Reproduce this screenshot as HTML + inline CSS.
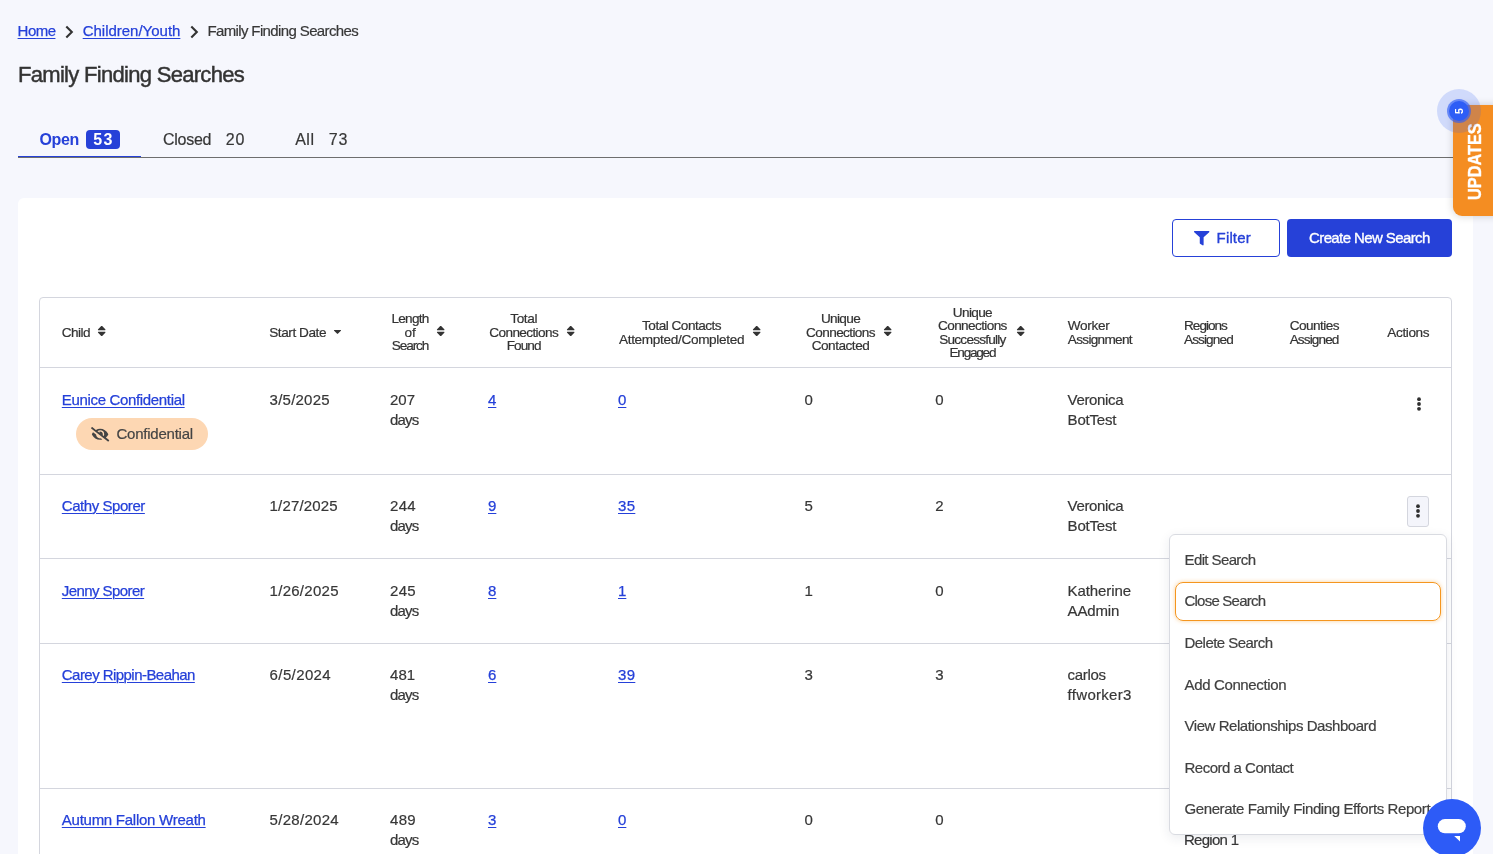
<!DOCTYPE html>
<html lang="en">
<head>
<meta charset="utf-8">
<title>Family Finding Searches</title>
<style>
*{box-sizing:border-box;margin:0;padding:0}
html,body{width:1493px;height:854px;overflow:hidden}
body{position:relative;background:#f6f7fd;font-family:"Liberation Sans",sans-serif;font-size:15px;line-height:20px;color:#373737;-webkit-text-stroke:.2px}
a{color:#2540d9;-webkit-text-stroke:.25px;text-decoration:underline;text-decoration-thickness:1px;text-underline-offset:1.6px;text-decoration-thickness:1.2px}
.abs{position:absolute;white-space:nowrap}
body>*{will-change:transform}
svg{display:block;position:absolute;overflow:visible}
/* breadcrumb */
.crumbs{position:absolute;left:0;top:21px;height:20px;width:500px}
.crumbs .abs{top:0}
h1{-webkit-text-stroke:.45px;position:absolute;left:17.7px;top:61.2px;font-size:22px;line-height:28px;font-weight:400;color:#333;white-space:nowrap}
/* tabs */
.tabs{position:absolute;left:18px;top:118px;width:1455px;height:40px;font-size:16px;line-height:20px}
.tabs .abs{top:11.6px}
.tabs .rule{position:absolute;left:0;right:0;top:39px;height:1px;background:#6e6e6e}
.tabs .active{position:absolute;left:0;top:37.6px;width:123px;height:1.6px;background:#2641d8}
.tabs b{color:#2641d8;-webkit-text-stroke:0}
.badge{position:absolute;left:68px;top:12px;width:34px;height:19px;border-radius:4px;padding-left:1px;background:#2641d8;color:#fff;font-weight:700;text-align:center;line-height:19px;-webkit-text-stroke:0}
/* card */
.card{position:absolute;left:18px;top:198px;width:1455px;height:700px;background:#fff;border-radius:6px}
.btn{position:absolute;top:21px;height:38px;border-radius:4px;font-size:15px;line-height:20px}
.btn .abs{top:8.1px;-webkit-text-stroke:.35px}
.btn-o{left:1154px;width:108px;border:1px solid #2641d8;background:#fff;color:#2641d8}
.btn-p{left:1269px;width:165px;background:#2641d8;color:#fff}
.btn-p .abs{top:9.1px}
/* table */
.tbl{position:absolute;left:21px;top:99px;width:1413px;height:620px;border:1px solid #d4d6de;border-radius:4px 4px 0 0}
.hr{position:absolute;left:0;right:0;height:1px;background:#d4d6de}
.th{position:absolute;font-size:13.6px;line-height:13.6px;color:#333;white-space:nowrap}
.th.c{text-align:center;width:160px}
.th span{display:inline-block}
.td{position:absolute;white-space:nowrap}
.pill{position:absolute;left:36px;top:120px;width:132px;height:32px;border-radius:16px;background:#fdd7b3;color:#444}
.pill .abs{left:40.4px;top:6.1px}
.kb{position:absolute;left:1367px;top:198px;width:22px;height:30.5px;border:1px solid #d4d6de;border-radius:3px;background:#f4f5fb}
/* menu */
.menu{position:absolute;left:1169px;top:534px;width:278px;height:301px;background:#fff;border:1px solid #d9dbe1;border-radius:6px;box-shadow:0 3px 12px rgba(30,40,80,.09);overflow:hidden}
.mi{position:absolute;left:5px;width:266px;height:39px;border-radius:8px;border:1.5px solid transparent}
.mi .abs{left:8.5px;top:8px;color:#404040}
.mi.f{border-color:#f5961f;box-shadow:0 0 4px rgba(245,150,31,.45)}
/* floating */
.upd{position:absolute;left:1453px;top:105px;width:48px;height:111px;background:#f48d22;border-radius:0 0 0 9px;box-shadow:0 0 8px rgba(0,0,0,.18)}
.upd .txt{position:absolute;left:1.5px;top:0.5px;width:111px;height:40px;transform-origin:0 0;transform:translate(0,111px) rotate(-90deg);color:#fff;font-weight:700;font-size:18px;line-height:40px;text-align:center;white-space:nowrap}
.upd .txt span{display:inline-block;transform:scaleX(.905);-webkit-text-stroke:.35px #fff}
.halo{position:absolute;left:1437px;top:89px;width:44px;height:44px;border-radius:50%;background:rgba(48,94,246,.19)}
.halo i{position:absolute;left:10px;top:10px;width:24px;height:24px;border-radius:50%;background:rgba(48,94,246,.65)}
.halo u{position:absolute;left:12px;top:12px;width:20px;height:20px;border-radius:50%;background:#2e5df6;text-decoration:none}
.halo em{position:absolute;left:12px;top:12px;width:20px;height:20px;transform:rotate(-90deg);color:#fff;font-style:normal;font-weight:700;font-size:10.5px;line-height:20px;text-align:center;-webkit-text-stroke:0}
.chat{position:absolute;left:1423px;top:799px;width:58px;height:58px;border-radius:50%;background:#2d5bf7}

</style>
</head>
<body>
<div class="crumbs">
  <a class="abs" style="left:17.6px" href="#"><span id="t0" style="letter-spacing:-0.539px">Home</span></a>
  <svg style="left:64px;top:3.5px" width="11" height="14" viewBox="0 0 11 14"><path d="M2.3 1.6 L7.8 7 L2.3 12.4" fill="none" stroke="#333" stroke-width="2.1"/></svg>
  <a class="abs" style="left:82.7px" href="#"><span id="t1" style="letter-spacing:-0.012px">Children/Youth</span></a>
  <svg style="left:188.5px;top:3.5px" width="11" height="14" viewBox="0 0 11 14"><path d="M2.3 1.6 L7.8 7 L2.3 12.4" fill="none" stroke="#333" stroke-width="2.1"/></svg>
  <span class="abs" style="left:207.4px"><span id="t2" style="letter-spacing:-0.622px">Family Finding Searches</span></span>
</div>
<h1><span id="t3" style="letter-spacing:-0.700px">Family Finding Searches</span></h1>

<div class="tabs">
  <div class="rule"></div><div class="active"></div>
  <b class="abs" style="left:21.4px"><span id="t4" style="letter-spacing:-0.297px">Open</span></b>
  <div class="badge"><span id="t5" style="letter-spacing:1.303px">53</span></div>
  <span class="abs" style="left:144.9px"><span id="t6" style="letter-spacing:-0.242px">Closed</span></span>
  <span class="abs" style="left:207.7px"><span id="t7" style="letter-spacing:0.803px">20</span></span>
  <span class="abs" style="left:277.2px"><span id="t8" style="letter-spacing:0.509px">All</span></span>
  <span class="abs" style="left:310.8px"><span id="t9" style="letter-spacing:0.803px">73</span></span>
</div>

<div class="card">
  <div class="btn btn-o">
    <svg style="left:21px;top:11px" width="15.4" height="14.4" viewBox="0 0 512 512" preserveAspectRatio="none"><path fill="#2641d8" d="M487.976 0H24.028C2.71 0-8.047 25.866 7.058 40.971L192 225.941V432c0 7.831 3.821 15.17 10.237 19.662l80 55.98C298.02 518.69 320 507.493 320 487.98V225.941l184.947-184.97C520.021 25.896 509.338 0 487.976 0z"/></svg>
    <span class="abs" style="left:43.6px"><span id="t10" style="letter-spacing:0.151px">Filter</span></span>
  </div>
  <div class="btn btn-p"><span class="abs" style="left:22px"><span id="t11" style="letter-spacing:-0.600px">Create New Search</span></span></div>

  <div class="tbl">
    <!-- header -->
    <div class="th" style="left:21.8px;top:27.90px"><span id="t12" style="letter-spacing:-0.546px">Child</span></div>
    <svg style="left:58.2px;top:28.1px" width="7.4" height="10" viewBox="20 60 280 392" preserveAspectRatio="none"><path fill="#333" d="M41 288h238c21.4 0 32.1 25.9 17 41L177 448c-9.4 9.4-24.6 9.400-33.9 0L24 329c-15.1-15.1-4.4-41 17-41zm255-105L177 64c-9.400-9.400-24.600-9.400-33.900 0L24 183c-15.100 15.100-4.400 41 17 41h238c21.400 0 32.100-25.900 17-41z"/></svg>
    <div class="th" style="left:229.2px;top:27.90px"><span id="t13" style="letter-spacing:-0.434px">Start Date</span></div>
    <svg style="left:294.2px;top:31.8px" width="7" height="4" viewBox="13 192 294 169" preserveAspectRatio="none"><path fill="#333" d="M31.3 192h257.300c17.800 0 26.700 21.500 14.100 34.100L174.100 354.800c-7.800 7.800-20.500 7.800-28.300 0L17.200 226.100C4.600 213.500 13.500 192 31.300 192z"/></svg>
    <div class="th c" style="left:290.0px;top:14.30px"><span id="t14" style="letter-spacing:-0.796px">Length</span><br><span id="t15" style="letter-spacing:-0.244px">of</span><br><span id="t16" style="letter-spacing:-1.116px">Search</span></div>
    <svg style="left:397.3px;top:28.1px" width="7.4" height="10" viewBox="20 60 280 392" preserveAspectRatio="none"><path fill="#333" d="M41 288h238c21.4 0 32.1 25.9 17 41L177 448c-9.4 9.4-24.6 9.400-33.9 0L24 329c-15.1-15.1-4.4-41 17-41zm255-105L177 64c-9.400-9.400-24.600-9.400-33.900 0L24 183c-15.100 15.100-4.400 41 17 41h238c21.400 0 32.100-25.900 17-41z"/></svg>
    <div class="th c" style="left:403.7px;top:14.30px"><span id="t17" style="letter-spacing:-0.405px">Total</span><br><span id="t18" style="letter-spacing:-0.618px">Connections</span><br><span id="t19" style="letter-spacing:-0.937px">Found</span></div>
    <svg style="left:526.9px;top:28.1px" width="7.4" height="10" viewBox="20 60 280 392" preserveAspectRatio="none"><path fill="#333" d="M41 288h238c21.4 0 32.1 25.9 17 41L177 448c-9.4 9.4-24.6 9.400-33.9 0L24 329c-15.1-15.1-4.4-41 17-41zm255-105L177 64c-9.400-9.400-24.600-9.400-33.900 0L24 183c-15.100 15.100-4.400 41 17 41h238c21.400 0 32.100-25.900 17-41z"/></svg>
    <div class="th c" style="left:561.6px;top:21.10px"><span id="t20" style="letter-spacing:-0.503px">Total Contacts</span><br><span id="t21" style="letter-spacing:-0.332px">Attempted/Completed</span></div>
    <svg style="left:713.1px;top:28.1px" width="7.4" height="10" viewBox="20 60 280 392" preserveAspectRatio="none"><path fill="#333" d="M41 288h238c21.4 0 32.1 25.9 17 41L177 448c-9.4 9.4-24.6 9.400-33.9 0L24 329c-15.1-15.1-4.4-41 17-41zm255-105L177 64c-9.400-9.400-24.600-9.400-33.900 0L24 183c-15.100 15.100-4.400 41 17 41h238c21.400 0 32.100-25.900 17-41z"/></svg>
    <div class="th c" style="left:720.5px;top:14.30px"><span id="t22" style="letter-spacing:-0.656px">Unique</span><br><span id="t23" style="letter-spacing:-0.618px">Connections</span><br><span id="t24" style="letter-spacing:-0.471px">Contacted</span></div>
    <svg style="left:844.4px;top:28.1px" width="7.4" height="10" viewBox="20 60 280 392" preserveAspectRatio="none"><path fill="#333" d="M41 288h238c21.4 0 32.1 25.9 17 41L177 448c-9.4 9.4-24.6 9.400-33.9 0L24 329c-15.1-15.1-4.4-41 17-41zm255-105L177 64c-9.400-9.400-24.600-9.400-33.900 0L24 183c-15.100 15.100-4.400 41 17 41h238c21.400 0 32.100-25.900 17-41z"/></svg>
    <div class="th c" style="left:852.4px;top:7.50px"><span id="t25" style="letter-spacing:-0.656px">Unique</span><br><span id="t26" style="letter-spacing:-0.618px">Connections</span><br><span id="t27" style="letter-spacing:-0.778px">Successfully</span><br><span id="t28" style="letter-spacing:-1.256px">Engaged</span></div>
    <svg style="left:976.7px;top:28.1px" width="7.4" height="10" viewBox="20 60 280 392" preserveAspectRatio="none"><path fill="#333" d="M41 288h238c21.4 0 32.1 25.9 17 41L177 448c-9.4 9.4-24.6 9.400-33.9 0L24 329c-15.1-15.1-4.4-41 17-41zm255-105L177 64c-9.400-9.400-24.600-9.400-33.900 0L24 183c-15.100 15.100-4.400 41 17 41h238c21.400 0 32.100-25.900 17-41z"/></svg>
    <div class="th" style="left:1027.8px;top:21.10px"><span id="t29" style="letter-spacing:-0.312px">Worker</span><br><span id="t30" style="letter-spacing:-0.692px">Assignment</span></div>
    <div class="th" style="left:1144.0px;top:21.10px"><span id="t31" style="letter-spacing:-0.996px">Regions</span><br><span id="t32" style="letter-spacing:-0.889px">Assigned</span></div>
    <div class="th" style="left:1249.7px;top:21.10px"><span id="t33" style="letter-spacing:-0.537px">Counties</span><br><span id="t34" style="letter-spacing:-0.889px">Assigned</span></div>
    <div class="th" style="left:1347.3px;top:27.90px"><span id="t35" style="letter-spacing:-0.380px">Actions</span></div>
    <div class="hr" style="top:69px"></div>
    <div class="hr" style="top:176px"></div>
    <div class="hr" style="top:260px"></div>
    <div class="hr" style="top:345px"></div>
    <div class="hr" style="top:490px"></div>
    <!-- rows -->
    <div class="td" style="left:21.8px;top:91.5px"><a href="#"><span id="t36" style="letter-spacing:-0.337px">Eunice Confidential</span></a></div>
    <div class="td" style="left:229.6px;top:91.5px"><span id="t37" style="letter-spacing:0.230px">3/5/2025</span></div>
    <div class="td" style="left:350.1px;top:91.5px"><span id="t38" style="letter-spacing:-0.066px">207</span><br><span id="t39" style="letter-spacing:-0.862px">days</span></div>
    <div class="td" style="left:448.0px;top:91.5px"><a href="#"><span id="t40">4</span></a></div>
    <div class="td" style="left:578.0px;top:91.5px"><a href="#"><span id="t41">0</span></a></div>
    <div class="td" style="left:764.5px;top:91.5px"><span id="t42">0</span></div>
    <div class="td" style="left:895.2px;top:91.5px"><span id="t43">0</span></div>
    <div class="td" style="left:1027.6px;top:91.5px"><span id="t44" style="letter-spacing:-0.339px">Veronica</span><br><span id="t45" style="letter-spacing:-0.205px">BotTest</span></div>
    <div class="td" style="left:21.8px;top:197.5px"><a href="#"><span id="t46" style="letter-spacing:-0.443px">Cathy Sporer</span></a></div>
    <div class="td" style="left:229.6px;top:197.5px"><span id="t47" style="letter-spacing:0.171px">1/27/2025</span></div>
    <div class="td" style="left:350.1px;top:197.5px"><span id="t48" style="letter-spacing:0.234px">244</span><br><span id="t49" style="letter-spacing:-0.862px">days</span></div>
    <div class="td" style="left:448.0px;top:197.5px"><a href="#"><span id="t50">9</span></a></div>
    <div class="td" style="left:578.0px;top:197.5px"><a href="#"><span id="t51" style="letter-spacing:0.312px">35</span></a></div>
    <div class="td" style="left:764.5px;top:197.5px"><span id="t52">5</span></div>
    <div class="td" style="left:895.2px;top:197.5px"><span id="t53">2</span></div>
    <div class="td" style="left:1027.6px;top:197.5px"><span id="t54" style="letter-spacing:-0.339px">Veronica</span><br><span id="t55" style="letter-spacing:-0.205px">BotTest</span></div>
    <div class="td" style="left:21.8px;top:282.5px"><a href="#"><span id="t56" style="letter-spacing:-0.574px">Jenny Sporer</span></a></div>
    <div class="td" style="left:229.6px;top:282.5px"><span id="t57" style="letter-spacing:0.271px">1/26/2025</span></div>
    <div class="td" style="left:350.1px;top:282.5px"><span id="t58" style="letter-spacing:0.234px">245</span><br><span id="t59" style="letter-spacing:-0.862px">days</span></div>
    <div class="td" style="left:448.0px;top:282.5px"><a href="#"><span id="t60">8</span></a></div>
    <div class="td" style="left:578.0px;top:282.5px"><a href="#"><span id="t61">1</span></a></div>
    <div class="td" style="left:764.5px;top:282.5px"><span id="t62">1</span></div>
    <div class="td" style="left:895.2px;top:282.5px"><span id="t63">0</span></div>
    <div class="td" style="left:1027.6px;top:282.5px"><span id="t64" style="letter-spacing:-0.090px">Katherine</span><br><span id="t65" style="letter-spacing:-0.166px">AAdmin</span></div>
    <div class="td" style="left:21.8px;top:366.5px"><a href="#"><span id="t66" style="letter-spacing:-0.546px">Carey Rippin-Beahan</span></a></div>
    <div class="td" style="left:229.6px;top:366.5px"><span id="t67" style="letter-spacing:0.387px">6/5/2024</span></div>
    <div class="td" style="left:350.1px;top:366.5px"><span id="t68" style="letter-spacing:0.034px">481</span><br><span id="t69" style="letter-spacing:-0.862px">days</span></div>
    <div class="td" style="left:448.0px;top:366.5px"><a href="#"><span id="t70">6</span></a></div>
    <div class="td" style="left:578.0px;top:366.5px"><a href="#"><span id="t71" style="letter-spacing:0.312px">39</span></a></div>
    <div class="td" style="left:764.5px;top:366.5px"><span id="t72">3</span></div>
    <div class="td" style="left:895.2px;top:366.5px"><span id="t73">3</span></div>
    <div class="td" style="left:1027.6px;top:366.5px"><span id="t74" style="letter-spacing:-0.303px">carlos</span><br><span id="t75" style="letter-spacing:0.297px">ffworker3</span></div>
    <div class="td" style="left:21.8px;top:511.5px"><a href="#"><span id="t76" style="letter-spacing:-0.256px">Autumn Fallon Wreath</span></a></div>
    <div class="td" style="left:229.6px;top:511.5px"><span id="t77" style="letter-spacing:0.296px">5/28/2024</span></div>
    <div class="td" style="left:350.1px;top:511.5px"><span id="t78" style="letter-spacing:0.234px">489</span><br><span id="t79" style="letter-spacing:-0.862px">days</span></div>
    <div class="td" style="left:448.0px;top:511.5px"><a href="#"><span id="t80">3</span></a></div>
    <div class="td" style="left:578.0px;top:511.5px"><a href="#"><span id="t81">0</span></a></div>
    <div class="td" style="left:764.5px;top:511.5px"><span id="t82">0</span></div>
    <div class="td" style="left:895.2px;top:511.5px"><span id="t83">0</span></div>
    <div class="td" style="left:1144.0px;top:511.5px"><span id="t84" style="letter-spacing:-0.721px">Region 1</span><br><span id="t85" style="letter-spacing:-0.721px">Region 1</span></div>
    <div class="pill">
      <svg style="left:14.8px;top:9.3px" width="18.2" height="14.6" viewBox="0 0 640 512" preserveAspectRatio="none"><path fill="#444" d="M320 400c-75.85 0-137.25-58.71-142.9-133.11L72.2 185.82c-13.79 17.3-26.48 35.59-36.72 55.59a32.35 32.35 0 0 0 0 29.19C89.71 376.41 197.07 448 320 448c26.91 0 52.87-4 77.89-10.46L346 397.39a144.13 144.13 0 0 1-26 2.61zm313.82 58.1l-110.55-85.44a331.25 331.25 0 0 0 81.25-102.07 32.35 32.35 0 0 0 0-29.19C550.29 135.59 442.93 64 320 64a308.15 308.15 0 0 0-147.32 37.7L45.46 3.37A16 16 0 0 0 23 6.18L3.37 31.45A16 16 0 0 0 6.18 53.9l588.36 454.73a16 16 0 0 0 22.46-2.81l19.64-25.27a16 16 0 0 0-2.82-22.45zm-183.72-142l-39.3-30.38A94.75 94.75 0 0 0 416 256a94.76 94.76 0 0 0-121.31-92.21A47.65 47.65 0 0 1 304 192a46.64 46.64 0 0 1-1.54 10l-73.61-56.89A142.31 142.31 0 0 1 320 112a143.92 143.92 0 0 1 144 144c0 21.63-5.29 41.79-13.9 60.11z"/></svg>
      <span class="abs"><span id="t86" style="letter-spacing:-0.220px">Confidential</span></span>
    </div>
    <div class="kb"></div>
    <svg style="left:1376.3px;top:97.8px" width="6" height="16" viewBox="-3 -8 6 16"><circle cx="0" cy="-4.8" r="1.9" fill="#2f2f2f"/><circle cx="0" cy="0" r="1.9" fill="#2f2f2f"/><circle cx="0" cy="4.800" r="1.9" fill="#2f2f2f"/></svg>
    <svg style="left:1375.4px;top:204.5px" width="6" height="16" viewBox="-3 -8 6 16"><circle cx="0" cy="-4.8" r="1.9" fill="#2f2f2f"/><circle cx="0" cy="0" r="1.9" fill="#2f2f2f"/><circle cx="0" cy="4.800" r="1.9" fill="#2f2f2f"/></svg>
  </div>
</div>

<div class="menu">
  <div class="mi" style="top:5.55px"><span class="abs"><span id="t87" style="letter-spacing:-0.605px">Edit Search</span></span></div>
  <div class="mi f" style="top:47.20px"><span class="abs"><span id="t88" style="letter-spacing:-0.777px">Close Search</span></span></div>
  <div class="mi" style="top:88.85px"><span class="abs"><span id="t89" style="letter-spacing:-0.539px">Delete Search</span></span></div>
  <div class="mi" style="top:130.50px"><span class="abs"><span id="t90" style="letter-spacing:-0.358px">Add Connection</span></span></div>
  <div class="mi" style="top:172.15px"><span class="abs"><span id="t91" style="letter-spacing:-0.445px">View Relationships Dashboard</span></span></div>
  <div class="mi" style="top:213.80px"><span class="abs"><span id="t92" style="letter-spacing:-0.496px">Record a Contact</span></span></div>
  <div class="mi" style="top:255.45px"><span class="abs"><span id="t93" style="letter-spacing:-0.394px">Generate Family Finding Efforts Report</span></span></div>
</div>

<div class="upd"><div class="txt"><span id="upd">UPDATES</span></div></div>
<div class="halo"><i></i><u></u><em>5</em></div>
<div class="chat">
  <svg style="left:0;top:0" width="58" height="58" viewBox="0 0 58 58"><rect x="14.8" y="20.1" width="28" height="14.1" rx="7.05" fill="#fff"/><path d="M31.2 37 H37 V42.4 Z" fill="#fff"/></svg>
</div>

</body>
</html>
